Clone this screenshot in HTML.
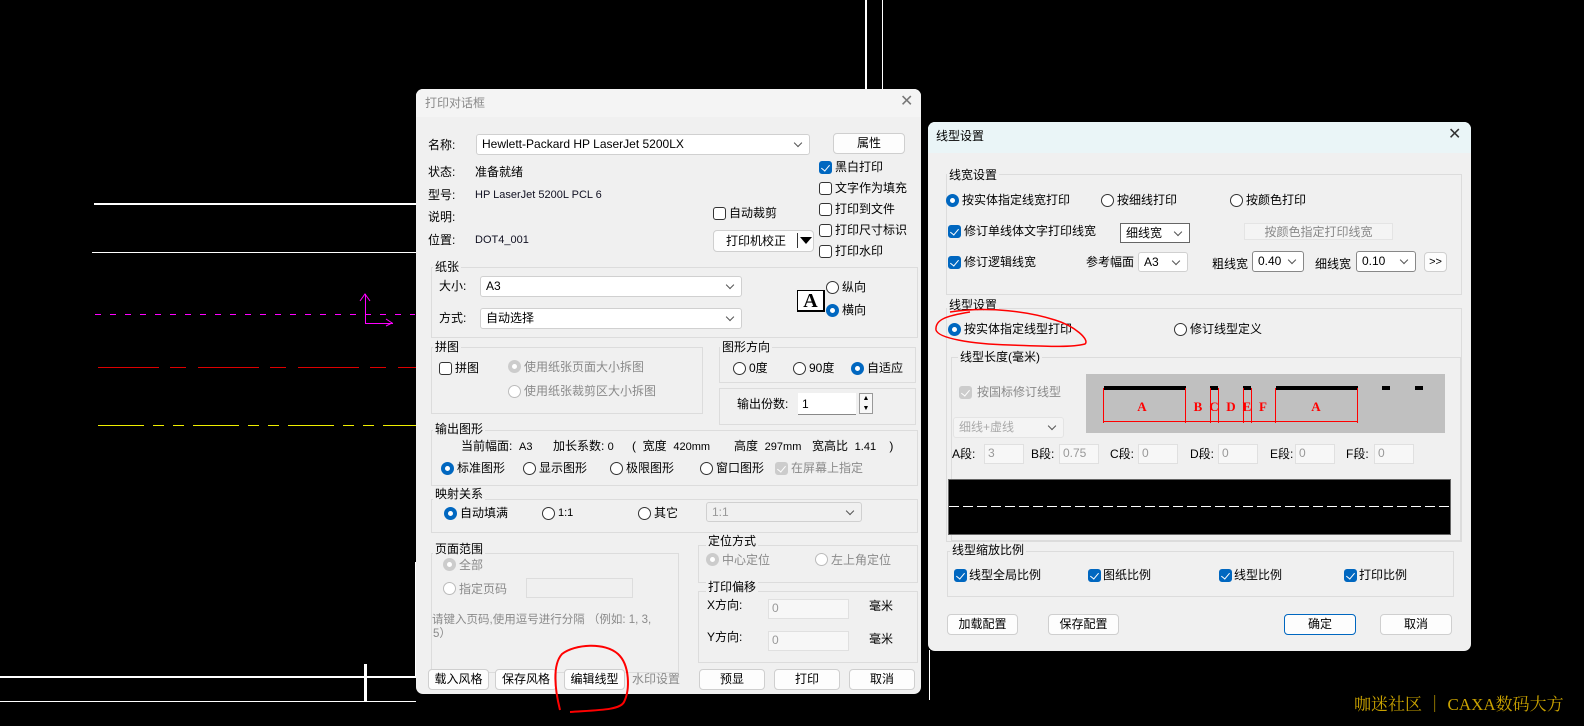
<!DOCTYPE html>
<html><head><meta charset="utf-8">
<style>
*{box-sizing:border-box;margin:0;padding:0}
body{width:1584px;height:726px;background:#000;position:relative;overflow:hidden;font-family:"Liberation Sans","Noto Sans CJK SC",sans-serif;font-size:12px;color:#000}
.a{position:absolute}
.t{position:absolute;white-space:nowrap;line-height:16px;height:16px}
.g{color:#8a8a8a}
.dlg{position:absolute;background:#f0f0f0;border-radius:7px;overflow:hidden}
.grp{position:absolute;border:1px solid #dcdcdc}
.lbl{position:absolute;background:#f0f0f0;padding:0 2px;line-height:16px;white-space:nowrap}
.cb{position:absolute;width:13px;height:13px;border:1px solid #333;border-radius:3px;background:#fff}
.cb.on{background:#0067c0;border-color:#0067c0}
.cb.on::after{content:"";position:absolute;left:3px;top:1px;width:4px;height:7px;border:solid #fff;border-width:0 1.5px 1.5px 0;transform:rotate(40deg)}
.cb.dis{background:#ccc;border-color:#ccc}
.rd{position:absolute;width:13px;height:13px;border:1px solid #333;border-radius:50%;background:#fff}
.rd.on{background:#fff;border:4px solid #0067c0}
.rd.dis{border-color:#bbb}
.rd.dison{border:4px solid #ccc}
.btn{position:absolute;background:#fdfdfd;border:1px solid #cfcfcf;border-radius:4px;text-align:center;line-height:19px}
.cmb{position:absolute;background:#fff;border:1px solid #d0d0d0;border-radius:3px;padding-left:5px;line-height:19px;white-space:nowrap}
.cmb::after{content:"";position:absolute;right:8px;top:5px;width:5px;height:5px;border:solid #555;border-width:0 1px 1px 0;transform:rotate(45deg)}
.inp{position:absolute;background:#f7f7f7;border:1px solid #e0e0e0;padding-left:3px;line-height:17px;color:#999}
</style></head><body>

<!-- CAD background lines -->
<div class="a" style="left:94px;top:203px;width:322px;height:2px;background:#fff"></div>
<div class="a" style="left:92px;top:252px;width:324px;height:1px;background:#fff"></div>
<div class="a" style="left:95px;top:314px;width:320px;height:1px;background:repeating-linear-gradient(90deg,#f0f 0 6px,transparent 6px 15px)"></div>
<div class="a" style="left:365px;top:294px;width:1px;height:30px;background:#f0f"></div>
<div class="a" style="left:365px;top:323px;width:28px;height:1px;background:#f0f"></div>
<svg class="a" style="left:358px;top:290px" width="40" height="40"><path d="M2 11 L7 4 L12 11 M28 29 L34 33 L28 36" stroke="#f0f" fill="none" stroke-width="1"/></svg>
<div class="a" style="left:98px;top:367px;width:318px;height:1px;background:repeating-linear-gradient(90deg,#d00 0 61px,transparent 61px 72px,#d00 72px 88px,transparent 88px 100px)"></div>
<div class="a" style="left:98px;top:425px;width:318px;height:1px;background:repeating-linear-gradient(90deg,#ee0 0 46px,transparent 46px 55px,#ee0 55px 66px,transparent 66px 75px,#ee0 75px 86px,transparent 86px 95px)"></div>
<div class="a" style="left:0;top:676px;width:416px;height:2px;background:#fff"></div>
<div class="a" style="left:0;top:701px;width:416px;height:1px;background:#fff"></div>
<div class="a" style="left:364px;top:664px;width:3px;height:38px;background:#fff"></div>
<div class="a" style="left:415px;top:562px;width:2px;height:115px;background:#fff"></div>
<div class="a" style="left:865px;top:0;width:2px;height:90px;background:#fff"></div>
<div class="a" style="left:882px;top:0;width:1px;height:90px;background:#fff"></div>
<div class="a" style="left:929px;top:650px;width:1px;height:50px;background:#fff"></div>

<!-- LEFT DIALOG -->
<div class="dlg" style="left:416px;top:89px;width:505px;height:605px">
<div class="a" style="left:0;top:0;width:505px;height:28px;background:#f4f4f4"></div>
</div>
<div class="t g" style="left:425px;top:95px">打印对话框</div>
<div class="t" style="left:900px;top:94px;color:#777;font-size:16px">✕</div>

<div class="t" style="left:428px;top:137px">名称:</div>
<div class="cmb" style="left:476px;top:134px;width:334px;height:21px">Hewlett-Packard HP LaserJet 5200LX</div>
<div class="btn" style="left:833px;top:133px;width:72px;height:21px">属性</div>
<div class="t" style="left:428px;top:164px">状态:</div><div class="t" style="left:475px;top:164px">准备就绪</div>
<div class="t" style="left:428px;top:187px">型号:</div><div class="t" style="left:475px;top:187px;font-size:11px;color:#112">HP LaserJet 5200L PCL 6</div>
<div class="t" style="left:428px;top:209px">说明:</div>
<div class="t" style="left:428px;top:232px">位置:</div><div class="t" style="left:475px;top:232px;font-size:11px;color:#112">DOT4_001</div>
<div class="cb" style="left:713px;top:207px"></div><div class="t" style="left:729px;top:205px">自动裁剪</div>
<div class="btn" style="left:713px;top:230px;width:101px;height:22px;text-align:left;padding-left:12px;line-height:21px">打印机校正</div>
<div class="a" style="left:797px;top:233px;width:1px;height:15px;background:#333"></div>
<div class="a" style="left:800px;top:237px;width:0;height:0;border-left:6px solid transparent;border-right:6px solid transparent;border-top:7px solid #000"></div>
<div class="cb on" style="left:819px;top:161px"></div><div class="t" style="left:835px;top:159px">黑白打印</div>
<div class="cb" style="left:819px;top:182px"></div><div class="t" style="left:835px;top:180px">文字作为填充</div>
<div class="cb" style="left:819px;top:203px"></div><div class="t" style="left:835px;top:201px">打印到文件</div>
<div class="cb" style="left:819px;top:224px"></div><div class="t" style="left:835px;top:222px">打印尺寸标识</div>
<div class="cb" style="left:819px;top:245px"></div><div class="t" style="left:835px;top:243px">打印水印</div>

<div class="grp" style="left:431px;top:267px;width:487px;height:71px"></div><div class="lbl" style="left:433px;top:259px">纸张</div>
<div class="t" style="left:439px;top:278px">大小:</div>
<div class="cmb" style="left:480px;top:276px;width:262px;height:21px">A3</div>
<div class="t" style="left:439px;top:310px">方式:</div>
<div class="cmb" style="left:480px;top:308px;width:262px;height:21px">自动选择</div>
<div class="a" style="left:797px;top:290px;width:28px;height:22px;background:#fff;border:1px solid #000;border-right-width:2px;border-bottom-width:2px;font-family:'Liberation Serif',serif;font-size:20px;font-weight:bold;text-align:center;line-height:20px">A</div>
<div class="rd" style="left:826px;top:281px"></div><div class="t" style="left:842px;top:279px">纵向</div>
<div class="rd on" style="left:826px;top:304px"></div><div class="t" style="left:842px;top:302px">横向</div>

<div class="grp" style="left:431px;top:347px;width:272px;height:67px"></div><div class="lbl" style="left:433px;top:339px">拼图</div>
<div class="cb" style="left:439px;top:362px"></div><div class="t" style="left:455px;top:360px">拼图</div>
<div class="rd dison" style="left:508px;top:360px"></div><div class="t g" style="left:524px;top:359px">使用纸张页面大小拆图</div>
<div class="rd dis" style="left:508px;top:385px"></div><div class="t g" style="left:524px;top:383px">使用纸张裁剪区大小拆图</div>

<div class="grp" style="left:719px;top:347px;width:197px;height:36px"></div><div class="lbl" style="left:720px;top:339px">图形方向</div>
<div class="rd" style="left:733px;top:362px"></div><div class="t" style="left:749px;top:360px">0度</div>
<div class="rd" style="left:793px;top:362px"></div><div class="t" style="left:809px;top:360px">90度</div>
<div class="rd on" style="left:851px;top:362px"></div><div class="t" style="left:867px;top:360px">自适应</div>
<div class="grp" style="left:719px;top:388px;width:197px;height:37px"></div>
<div class="t" style="left:737px;top:396px">输出份数:</div>
<div class="a" style="left:798px;top:393px;width:58px;height:22px;background:#fff;border-bottom:1px solid #888;padding-left:4px;line-height:22px">1</div>
<div class="a" style="left:859px;top:393px;width:14px;height:21px;border:1px solid #999;background:#f8f8f8;font-size:7px;text-align:center;line-height:10px">▲<br>▼</div>

<div class="grp" style="left:431px;top:430px;width:487px;height:56px"></div><div class="lbl" style="left:433px;top:421px">输出图形</div>
<div class="t" style="left:461px;top:438px">当前幅面: &nbsp;<span style="font-size:11px">A3</span></div>
<div class="t" style="left:553px;top:438px">加长系数: <span style="font-size:11px">0</span></div>
<div class="t" style="left:632px;top:438px">(&nbsp; 宽度&nbsp; <span style="font-size:11px">420mm</span></div>
<div class="t" style="left:734px;top:438px">高度&nbsp; <span style="font-size:11px">297mm</span></div>
<div class="t" style="left:812px;top:438px">宽高比&nbsp; <span style="font-size:11px">1.41</span>&nbsp;&nbsp;&nbsp; )</div>
<div class="rd on" style="left:441px;top:462px"></div><div class="t" style="left:457px;top:460px">标准图形</div>
<div class="rd" style="left:523px;top:462px"></div><div class="t" style="left:539px;top:460px">显示图形</div>
<div class="rd" style="left:610px;top:462px"></div><div class="t" style="left:626px;top:460px">极限图形</div>
<div class="rd" style="left:700px;top:462px"></div><div class="t" style="left:716px;top:460px">窗口图形</div>
<div class="cb dis on" style="left:775px;top:462px;background:#ccc;border-color:#ccc"></div><div class="t g" style="left:791px;top:460px">在屏幕上指定</div>

<div class="grp" style="left:431px;top:499px;width:487px;height:34px"></div><div class="lbl" style="left:433px;top:486px">映射关系</div>
<div class="rd on" style="left:444px;top:507px"></div><div class="t" style="left:460px;top:505px">自动填满</div>
<div class="rd" style="left:542px;top:507px"></div><div class="t" style="left:558px;top:505px;font-size:11px">1:1</div>
<div class="rd" style="left:638px;top:507px"></div><div class="t" style="left:654px;top:505px">其它</div>
<div class="cmb" style="left:706px;top:502px;width:156px;height:20px;background:#f0f0f0;color:#999">1:1</div>

<div class="grp" style="left:431px;top:553px;width:248px;height:120px"></div><div class="lbl" style="left:433px;top:541px">页面范围</div>
<div class="rd dison" style="left:443px;top:558px"></div><div class="t g" style="left:459px;top:557px">全部</div>
<div class="rd dis" style="left:443px;top:582px"></div><div class="t g" style="left:459px;top:581px">指定页码</div>
<div class="a" style="left:526px;top:578px;width:107px;height:20px;border:1px solid #ddd"></div>
<div class="t g" style="left:432px;top:612px;font-size:11.5px">请键入页码,使用逗号进行分隔 （例如: 1, 3,</div>
<div class="t g" style="left:433px;top:626px;font-size:11.5px">5）</div>

<div class="grp" style="left:698px;top:545px;width:220px;height:38px"></div><div class="lbl" style="left:706px;top:533px">定位方式</div>
<div class="rd dison" style="left:706px;top:553px"></div><div class="t g" style="left:722px;top:552px">中心定位</div>
<div class="rd dis" style="left:815px;top:553px"></div><div class="t g" style="left:831px;top:552px">左上角定位</div>
<div class="grp" style="left:698px;top:591px;width:220px;height:72px"></div><div class="lbl" style="left:706px;top:579px">打印偏移</div>
<div class="t" style="left:707px;top:597px">X方向:</div><div class="inp" style="left:768px;top:599px;width:81px;height:20px">0</div><div class="t" style="left:869px;top:598px">毫米</div>
<div class="t" style="left:707px;top:629px">Y方向:</div><div class="inp" style="left:768px;top:631px;width:81px;height:20px">0</div><div class="t" style="left:869px;top:631px">毫米</div>

<div class="btn" style="left:428px;top:669px;width:61px;height:21px">载入风格</div>
<div class="btn" style="left:495px;top:669px;width:62px;height:21px">保存风格</div>
<div class="btn" style="left:564px;top:669px;width:61px;height:21px">编辑线型</div>
<div class="t g" style="left:632px;top:671px">水印设置</div>
<div class="btn" style="left:699px;top:669px;width:66px;height:21px">预显</div>
<div class="btn" style="left:774px;top:669px;width:66px;height:21px">打印</div>
<div class="btn" style="left:849px;top:669px;width:66px;height:21px">取消</div>
<svg class="a" style="left:550px;top:640px" width="85" height="80"><path d="M10 70 C5 50 2 25 12 14 C25 4 55 2 68 14 C80 25 80 50 74 62 C70 70 50 70 20 72" stroke="#f00" stroke-width="2" fill="none"/></svg>

<!-- RIGHT DIALOG -->
<div class="dlg" style="left:928px;top:122px;width:543px;height:529px">
<div class="a" style="left:0;top:0;width:543px;height:31px;background:#eaf5f7"></div>
</div>
<div class="t" style="left:936px;top:128px">线型设置</div>
<div class="t" style="left:1448px;top:127px;color:#333;font-size:16px">✕</div>

<div class="grp" style="left:946px;top:174px;width:516px;height:121px"></div><div class="lbl" style="left:947px;top:167px">线宽设置</div>
<div class="rd on" style="left:946px;top:194px"></div><div class="t" style="left:962px;top:192px">按实体指定线宽打印</div>
<div class="rd" style="left:1101px;top:194px"></div><div class="t" style="left:1117px;top:192px">按细线打印</div>
<div class="rd" style="left:1230px;top:194px"></div><div class="t" style="left:1246px;top:192px">按颜色打印</div>
<div class="cb on" style="left:948px;top:225px"></div><div class="t" style="left:964px;top:223px">修订单线体文字打印线宽</div>
<div class="cmb" style="left:1120px;top:223px;width:70px;height:20px;border-color:#666;border-radius:0">细线宽</div>
<div class="a" style="left:1244px;top:223px;width:149px;height:17px;background:#f4f4f4;border:1px solid #e4e4e4;text-align:center;line-height:16px;color:#888">按颜色指定打印线宽</div>
<div class="cb on" style="left:948px;top:256px"></div><div class="t" style="left:964px;top:254px">修订逻辑线宽</div>
<div class="t" style="left:1086px;top:254px">参考幅面</div>
<div class="cmb" style="left:1138px;top:252px;width:50px;height:20px">A3</div>
<div class="t" style="left:1212px;top:256px">粗线宽</div>
<div class="cmb" style="left:1252px;top:251px;width:52px;height:21px;border-color:#888">0.40</div>
<div class="t" style="left:1315px;top:256px">细线宽</div>
<div class="cmb" style="left:1356px;top:251px;width:60px;height:21px;border-color:#888">0.10</div>
<div class="btn" style="left:1424px;top:252px;width:23px;height:20px;line-height:18px;font-size:11px">&gt;&gt;</div>

<div class="grp" style="left:946px;top:308px;width:516px;height:234px"></div><div class="lbl" style="left:947px;top:297px">线型设置</div>
<div class="rd on" style="left:948px;top:323px"></div><div class="t" style="left:964px;top:321px">按实体指定线型打印</div>
<div class="rd" style="left:1174px;top:323px"></div><div class="t" style="left:1190px;top:321px">修订线型定义</div>
<svg class="a" style="left:930px;top:300px" width="170" height="52"><path d="M20 12 C60 6 100 12 125 20 C145 26 160 40 155 44 C140 48 110 46 80 45 C40 44 8 38 6 30 C5 20 15 16 40 12" stroke="#f00" stroke-width="1.5" fill="none"/></svg>

<div class="grp" style="left:951px;top:357px;width:510px;height:184px"></div><div class="lbl" style="left:958px;top:349px">线型长度(毫米)</div>
<div class="cb dis on" style="left:959px;top:386px;background:#ccc;border-color:#ccc"></div><div class="t g" style="left:977px;top:384px">按国标修订线型</div>
<div class="a" style="left:1086px;top:374px;width:359px;height:59px;background:#c0c0c0"></div>
<div class="a" style="left:1104px;top:386px;width:82px;height:4px;background:#000"></div>
<div class="a" style="left:1210px;top:386px;width:8px;height:4px;background:#000"></div>
<div class="a" style="left:1243px;top:386px;width:8px;height:4px;background:#000"></div>
<div class="a" style="left:1276px;top:386px;width:82px;height:4px;background:#000"></div>
<div class="a" style="left:1382px;top:386px;width:8px;height:4px;background:#000"></div>
<div class="a" style="left:1415px;top:386px;width:8px;height:4px;background:#000"></div>
<svg class="a" style="left:1086px;top:374px" width="359" height="59">
<g stroke="#f00" stroke-width="1"><path d="M17.5 14V49M99.5 14V49M124.5 14V49M132.5 14V49M157.5 14V49M165.5 14V49M189.5 14V49M271.5 14V49M17 47.5H272"/></g>
<g fill="#f00" font-family="Liberation Serif,serif" font-size="13" font-weight="bold" text-anchor="middle"><text x="56" y="37">A</text><text x="112" y="37">B</text><text x="128" y="37">C</text><text x="145" y="37">D</text><text x="161" y="37">E</text><text x="177" y="37">F</text><text x="230" y="37">A</text></g></svg>
<div class="cmb" style="left:953px;top:417px;width:111px;height:21px;color:#aaa;background:#f4f4f4;border-color:#e4e4e4">细线+虚线</div>
<div class="t" style="left:952px;top:446px">A段:</div><div class="inp" style="left:984px;top:444px;width:40px;height:20px">3</div>
<div class="t" style="left:1031px;top:446px">B段:</div><div class="inp" style="left:1059px;top:444px;width:40px;height:20px">0.75</div>
<div class="t" style="left:1110px;top:446px">C段:</div><div class="inp" style="left:1138px;top:444px;width:40px;height:20px">0</div>
<div class="t" style="left:1190px;top:446px">D段:</div><div class="inp" style="left:1218px;top:444px;width:40px;height:20px">0</div>
<div class="t" style="left:1270px;top:446px">E段:</div><div class="inp" style="left:1295px;top:444px;width:40px;height:20px">0</div>
<div class="t" style="left:1346px;top:446px">F段:</div><div class="inp" style="left:1374px;top:444px;width:40px;height:20px">0</div>
<div class="a" style="left:948px;top:479px;width:503px;height:56px;background:#000;border:1px solid #666"></div>
<div class="a" style="left:949px;top:506px;width:500px;height:1px;background:repeating-linear-gradient(90deg,#fff 0 10px,transparent 10px 14px)"></div>

<div class="grp" style="left:947px;top:551px;width:507px;height:46px"></div><div class="lbl" style="left:950px;top:542px">线型缩放比例</div>
<div class="cb on" style="left:954px;top:569px"></div><div class="t" style="left:969px;top:567px">线型全局比例</div>
<div class="cb on" style="left:1088px;top:569px"></div><div class="t" style="left:1103px;top:567px">图纸比例</div>
<div class="cb on" style="left:1219px;top:569px"></div><div class="t" style="left:1234px;top:567px">线型比例</div>
<div class="cb on" style="left:1344px;top:569px"></div><div class="t" style="left:1359px;top:567px">打印比例</div>

<div class="btn" style="left:947px;top:614px;width:71px;height:21px">加载配置</div>
<div class="btn" style="left:1048px;top:614px;width:71px;height:21px">保存配置</div>
<div class="btn" style="left:1284px;top:614px;width:72px;height:21px;border-color:#0067c0">确定</div>
<div class="btn" style="left:1380px;top:614px;width:72px;height:21px">取消</div>

<div class="t" style="left:1354px;top:694px;height:22px;line-height:22px;font-family:'Liberation Serif','Noto Serif CJK SC',serif;font-size:17px;color:#c9a200">咖迷社区 ｜ CAXA数码大方</div>
</body></html>
